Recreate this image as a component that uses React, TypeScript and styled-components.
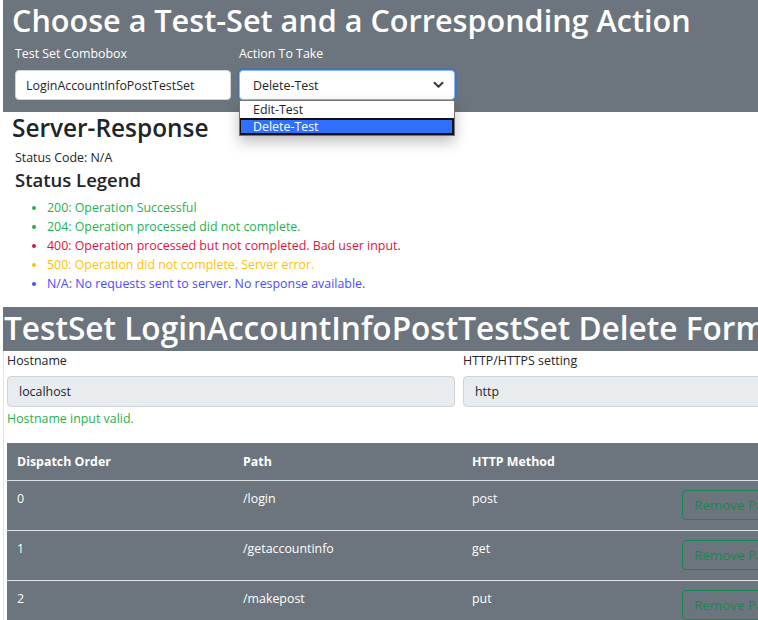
import React from "react";
import styled, { createGlobalStyle } from "styled-components";

const GlobalStyle = createGlobalStyle`
  html, body { margin: 0; padding: 0; overflow: hidden; background: #fff; }
  body { font-family: "Open Sans", "Noto Sans", sans-serif; font-size: 12.4px; color: #212529; }
  *, *::before, *::after { box-sizing: border-box; }
`;

const Page = styled.div`
  width: 940px;
  padding-left: 3px;
`;

const TopPanel = styled.section`
  background: #6c757d;
  height: 112px;
  padding: 0 12px;
`;

const BigTitle = styled.h1`
  margin: 0;
  font-size: 30.6px;
  font-weight: 600;
  line-height: 40px;
  color: #fff;
  white-space: nowrap;
`;

const TopTitle = styled(BigTitle)`
  margin-left: -3px;
  line-height: 40px;
`;

const FieldRow = styled.div`
  display: flex;
  gap: 8px;
  margin-top: 5px;
`;

const Field = styled.div`
  position: relative;
  width: 216px;
`;

const TopLabel = styled.label`
  display: block;
  color: #fff;
  font-size: 12.4px;
  line-height: 18px;
  margin-bottom: 7px;
`;

const TextBox = styled.div`
  height: 30px;
  background: #fff;
  border: 1px solid #ced4da;
  border-radius: 4px;
  padding: 0 10px;
  display: flex;
  align-items: center;
  font-size: 12.4px;
  color: #212529;
`;

const SelectBox = styled(TextBox)`
  border-color: #86b7fe;
  box-shadow: 0 0 0 2px rgba(13, 110, 253, 0.25);
  justify-content: space-between;
  padding: 0 10px 0 13px;
`;

const Popup = styled.ul`
  position: absolute;
  left: 0;
  top: 100%;
  width: 216px;
  margin: 0;
  padding: 0;
  list-style: none;
  background: #fff;
  border: 1px solid #767676;
  box-shadow: 0 6px 14px rgba(0, 0, 0, 0.25);
  z-index: 5;
`;

const PopupItem = styled.li<{ $active?: boolean }>`
  height: 17px;
  line-height: 13px;
  font-size: 12.4px;
  color: ${(p) => (p.$active ? "#fff" : "#212529")};
  background: ${(p) => (p.$active ? "#2f70ff" : "#fff")};
  border: 2px solid ${(p) => (p.$active ? "#111" : "transparent")};
  border-left-width: 1px;
  padding-left: 12px;
`;

const ResponseSection = styled.section`
  padding: 1px 12px 0 9px;
  height: 195px;
`;

const H2 = styled.h2`
  margin: 0;
  font-size: 24.4px;
  font-weight: 600;
  line-height: 30px;
`;

const StatusLine = styled.div`
  margin-left: 3px;
  margin-top: 6px;
  line-height: 18px;
`;

const H5 = styled.h5`
  margin: 0 0 0 3px;
  font-size: 18.5px;
  font-weight: 600;
  line-height: 26px;
`;

const Legend = styled.ul`
  margin: 5px 0 0 0;
  padding-left: 35px;
`;

const LegendItem = styled.li<{ $color: string }>`
  color: ${(p) => p.$color};
  line-height: 19px;
  font-size: 12.4px;
  &::marker { font-size: 11px; }
`;

const Card = styled.section`
  border-left: 1px solid #dee2e6;
`;

const CardHeader = styled.div`
  background: #6c757d;
  height: 44px;
  padding-left: 1px;
  margin-left: -1px;
`;

const CardTitle = styled(BigTitle)`
  font-size: 31.6px;
  line-height: 42px;
`;

const CardBody = styled.div`
  padding: 0 0 0 3px;
`;

const HostRow = styled.div`
  display: grid;
  grid-template-columns: 448px 448px;
  gap: 8px;
  margin-top: 1px;
`;

const FormLabel = styled.label`
  display: block;
  font-size: 12.4px;
  line-height: 18px;
  margin-bottom: 6px;
`;

const DisabledBox = styled(TextBox)`
  height: 31px;
  background: #e9ecef;
  padding: 0 11px;
`;

const ValidText = styled.div`
  color: #1fb14d;
  font-size: 12.4px;
  line-height: 18px;
  margin-top: 3px;
`;

const Table = styled.table`
  margin-top: 15px;
  width: 916px;
  border-collapse: collapse;
  background: #6c757d;
  color: #fff;
  table-layout: fixed;
`;

const Th = styled.th<{ $w?: number }>`
  text-align: left;
  font-weight: 700;
  font-size: 12.4px;
  padding: 10px 10px;
  line-height: 17px;
  height: 37px;
  width: ${(p) => (p.$w ? `${p.$w}px` : "auto")};
  border-bottom: 1px solid #dee2e6;
`;

const Td = styled.td`
  vertical-align: top;
  font-size: 12.4px;
  padding: 10px;
  line-height: 16px;
  border-bottom: 1px solid #dee2e6;
`;

const OutlineButton = styled.button`
  display: block;
  height: 30px;
  padding: 0 11px;
  margin-top: -1px;
  border: 1px solid #198754;
  border-radius: 4px;
  background: transparent;
  color: #198754;
  font-family: inherit;
  font-size: 13.4px;
  white-space: nowrap;
`;

const Chevron = () => (
  <svg width="11" height="8" viewBox="0 0 11 8" fill="none">
    <path d="M1.5 1.8 L5.5 5.8 L9.5 1.8" stroke="#343a40" strokeWidth="2" strokeLinecap="round" strokeLinejoin="round" />
  </svg>
);

const legend = [
  { c: "#1fb14d", t: "200: Operation Successful" },
  { c: "#1fb14d", t: "204: Operation processed did not complete." },
  { c: "#dc143c", t: "400: Operation processed but not completed. Bad user input." },
  { c: "#ffc107", t: "500: Operation did not complete. Server error." },
  { c: "#4b4bff", t: "N/A: No requests sent to server. No response available." },
];

const rows = [
  { o: "0", p: "/login", m: "post" },
  { o: "1", p: "/getaccountinfo", m: "get" },
  { o: "2", p: "/makepost", m: "put" },
];

export default function App() {
  return (
    <>
      <GlobalStyle />
      <Page>
        <TopPanel>
          <TopTitle>Choose a Test-Set and a Corresponding Action</TopTitle>
          <FieldRow>
            <Field>
              <TopLabel>Test Set Combobox</TopLabel>
              <TextBox>LoginAccountInfoPostTestSet</TextBox>
            </Field>
            <Field>
              <TopLabel>Action To Take</TopLabel>
              <SelectBox>
                <span>Delete-Test</span>
                <Chevron />
              </SelectBox>
              <Popup>
                <PopupItem>Edit-Test</PopupItem>
                <PopupItem $active>Delete-Test</PopupItem>
              </Popup>
            </Field>
          </FieldRow>
        </TopPanel>
        <ResponseSection>
          <H2>Server-Response</H2>
          <StatusLine>Status Code: N/A</StatusLine>
          <H5>Status Legend</H5>
          <Legend>
            {legend.map((l) => (
              <LegendItem key={l.t} $color={l.c}>{l.t}</LegendItem>
            ))}
          </Legend>
        </ResponseSection>
        <Card>
          <CardHeader>
            <CardTitle>TestSet LoginAccountInfoPostTestSet Delete Form</CardTitle>
          </CardHeader>
          <CardBody>
            <HostRow>
              <div>
                <FormLabel>Hostname</FormLabel>
                <DisabledBox>localhost</DisabledBox>
                <ValidText>Hostname input valid.</ValidText>
              </div>
              <div>
                <FormLabel>HTTP/HTTPS setting</FormLabel>
                <DisabledBox>http</DisabledBox>
              </div>
            </HostRow>
            <Table>
              <thead>
                <tr>
                  <Th $w={226}>Dispatch Order</Th>
                  <Th $w={229}>Path</Th>
                  <Th $w={210}>HTTP Method</Th>
                  <Th></Th>
                </tr>
              </thead>
              <tbody>
                {rows.map((r) => (
                  <tr key={r.o}>
                    <Td>{r.o}</Td>
                    <Td>{r.p}</Td>
                    <Td>{r.m}</Td>
                    <Td>
                      <OutlineButton>Remove Path</OutlineButton>
                    </Td>
                  </tr>
                ))}
              </tbody>
            </Table>
          </CardBody>
        </Card>
      </Page>
    </>
  );
}
